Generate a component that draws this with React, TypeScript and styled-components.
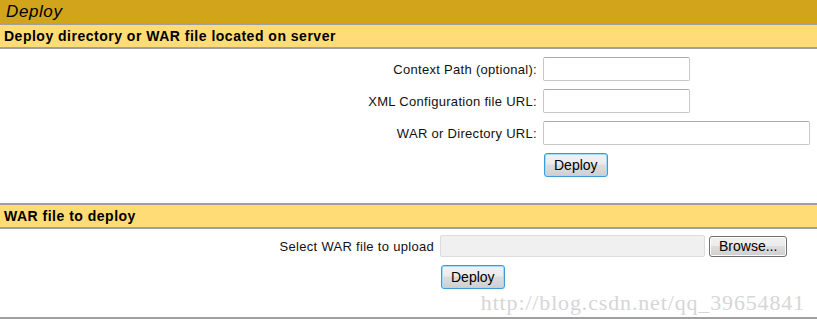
import React from 'react';
import styled, { createGlobalStyle } from 'styled-components';

const GlobalStyle = createGlobalStyle`
  html, body {
    margin: 0;
    padding: 0;
    background: #fff;
  }
  body {
    font-family: "Liberation Sans", Arial, sans-serif;
    font-size: 13px;
    color: #000;
  }
`;

const App: React.FC = () => {
  return (
    <Page>
      <GlobalStyle />
      <TitleBar>Deploy</TitleBar>

      <SectionHeader>Deploy directory or WAR file located on server</SectionHeader>
      <Body height={156} top={8}>
        <FormGrid labelWidth={537}>
          <Label>Context Path (optional):</Label>
          <TextInput width={147} />
          <Label>XML Configuration file URL:</Label>
          <TextInput width={147} />
          <Label>WAR or Directory URL:</Label>
          <TextInput width={267} />
          <span />
          <ActionRow>
            <Button primary>Deploy</Button>
          </ActionRow>
        </FormGrid>
      </Body>

      <SectionHeader>WAR file to deploy</SectionHeader>
      <Body height={90} top={6}>
        <FormGrid labelWidth={434}>
          <Label>Select WAR file to upload</Label>
          <FileRow>
            <FileBox />
            <Button small>Browse...</Button>
          </FileRow>
          <span />
          <ActionRow>
            <Button primary>Deploy</Button>
          </ActionRow>
        </FormGrid>
        <Watermark>http://blog.csdn.net/qq_39654841</Watermark>
      </Body>
    </Page>
  );
};

export default App;

// Styled components

const Page = styled.div`
  width: 817px;
  height: 319px;
  overflow: hidden;
`;

const TitleBar = styled.div`
  height: 25px;
  box-sizing: border-box;
  padding: 3px 0 0 6px;
  background: #d2a41c;
  border-bottom: 2px solid #a0a0a0;
  font-size: 17px;
  font-style: italic;
  line-height: 18px;
  letter-spacing: 0.6px;
  color: #000;
`;

const SectionHeader = styled.div`
  height: 24px;
  box-sizing: border-box;
  padding: 3px 0 0 4px;
  background: #ffdc75;
  border-bottom: 2px solid #a0a0a0;
  font-size: 14px;
  font-weight: bold;
  line-height: 17px;
  letter-spacing: 0.5px;
`;

const Body = styled.div<{ height: number; top: number }>`
  position: relative;
  height: ${p => p.height}px;
  box-sizing: border-box;
  padding-top: ${p => p.top}px;
  border-bottom: 2px solid #a0a0a0;
`;

const FormGrid = styled.div<{ labelWidth: number }>`
  display: grid;
  grid-template-columns: ${p => p.labelWidth}px 1fr;
  column-gap: 6px;
  row-gap: 8px;
  align-items: center;
`;

const Label = styled.div`
  text-align: right;
  font-size: 13px;
  letter-spacing: 0.3px;
  color: #111;
`;

const TextInput = styled.input<{ width: number }>`
  width: ${p => p.width}px;
  height: 24px;
  box-sizing: border-box;
  border: 1px solid #c8c8c8;
  border-top-color: #ababab;
  border-radius: 2px;
  background: #fff;
  outline: none;
`;

const FileRow = styled.div`
  display: flex;
  align-items: center;
  gap: 4px;
`;

const FileBox = styled.div`
  width: 265px;
  height: 22px;
  box-sizing: border-box;
  border: 1px solid #dcdcdc;
  border-radius: 2px;
  background: #f0f0f0;
`;

const ActionRow = styled.div`
  display: flex;
  padding-left: 1px;
`;

const Button = styled.button<{ primary?: boolean; small?: boolean }>`
  height: ${p => (p.small ? 21 : 24)}px;
  padding: 0 9px;
  box-sizing: border-box;
  font-family: "Liberation Sans", Arial, sans-serif;
  font-size: 14px;
  color: #000;
  border: 1px solid ${p => (p.primary ? '#3c9ad8' : '#707070')};
  border-radius: 3px;
  background: linear-gradient(#f2f2f2 0%, #ebebeb 45%, #dddddd 50%, #cfcfcf 100%);
  box-shadow: ${p => (p.primary ? 'inset 0 0 0 1px #9fdcf6' : 'inset 0 0 0 1px #fcfcfc')};
  cursor: pointer;
`;

const Watermark = styled.div`
  position: absolute;
  right: 12px;
  bottom: 1px;
  font-family: "Liberation Serif", "Times New Roman", serif;
  font-size: 22px;
  color: #d6d6d6;
  letter-spacing: 0.85px;
  pointer-events: none;
`;
